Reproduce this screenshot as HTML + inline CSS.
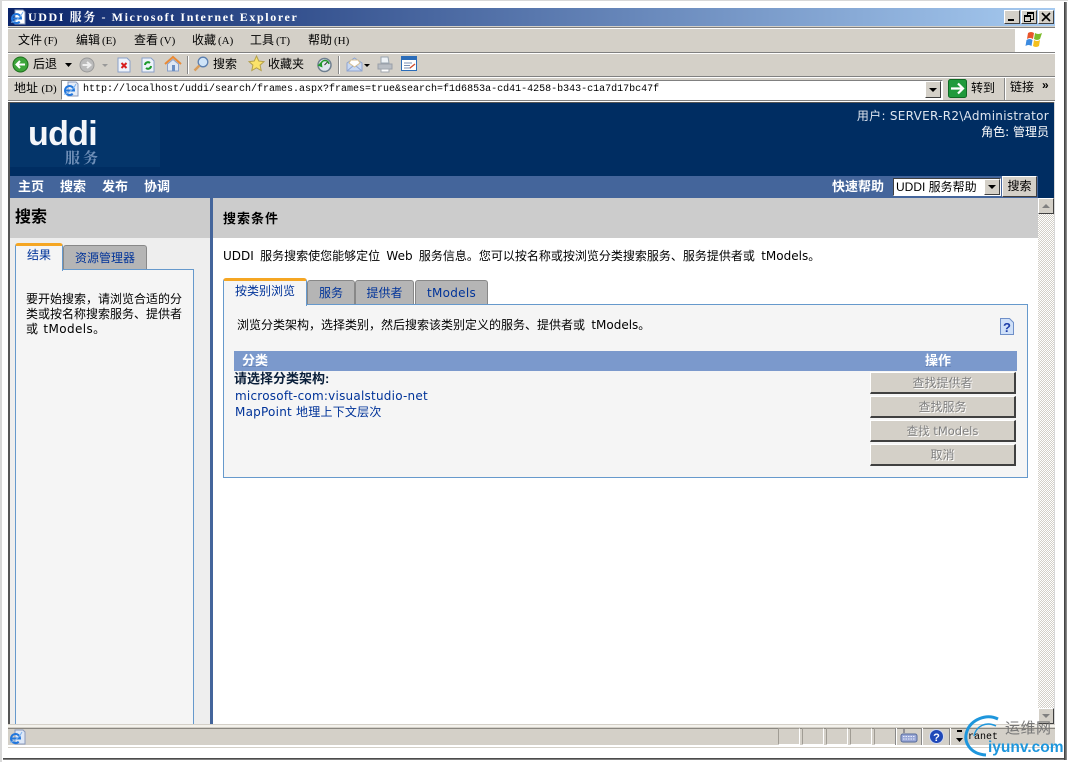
<!DOCTYPE html>
<html lang="zh"><head><meta charset="utf-8"><title>UDDI 服务</title>
<style>
html,body{margin:0;padding:0;background:#fff}
#p{position:relative;width:1068px;height:762px;overflow:hidden;background:#fff;font-family:"DejaVu Sans","Noto Sans CJK SC",sans-serif;font-size:12px;color:#000}
#p div,#p span.a,#p svg{position:absolute}
.t{white-space:nowrap;line-height:14px}
.cn{font-family:"Liberation Sans","WenQuanYi Zen Hei","Noto Sans CJK SC",sans-serif}
.b{font-weight:bold}
.lk{color:#003399;letter-spacing:.23px}
.m{font-family:"Liberation Serif",serif;font-size:11px;margin-left:2px}
.tab{box-sizing:border-box;background:#b5b5b5;border:1px solid #888;border-bottom:0;border-radius:3px 3px 0 0;color:#003399;text-align:center}
.act{box-sizing:border-box;background:#f5f5f5;border:1px solid #6699cc;border-top:3px solid #f5a623;border-bottom:0;border-radius:3px 3px 0 0;color:#003399;text-align:center}
.btn{box-sizing:border-box;left:870px;width:146px;height:22px;background:#d4d0c8;border-top:1px solid #fff;border-left:1px solid #fff;border-right:2px solid #404040;border-bottom:2px solid #404040;color:#808080;text-align:center;line-height:21px;text-shadow:1px 1px 0 #fff;white-space:nowrap}
.sc{top:728px;height:17px;width:22px;box-sizing:border-box;border:1px solid #fff;border-top-color:#a09c94;border-left-color:#a09c94}
.sep{width:1px;background:#888;border-right:1px solid #fff}
</style></head><body><div id="p">
<!-- outer edges -->
<div style="left:0;top:0;width:2px;height:762px;background:#d8d8d8"></div>
<div style="left:0;top:0;width:1068px;height:1px;background:#d8d8d8"></div>
<div style="left:3px;top:758px;width:1063px;height:2px;background:linear-gradient(#333,#999)"></div>
<div style="left:1064px;top:2px;width:3px;height:758px;background:linear-gradient(90deg,#333,#999)"></div>

<!-- chrome bg -->
<div style="left:8px;top:26px;width:1047px;height:76px;background:#d4d0c8"></div>
<!-- title bar -->
<div style="left:8px;top:8px;width:1047px;height:18px;background:linear-gradient(90deg,#0a246a,#a6caf0)"></div>
<svg style="left:10px;top:9px" width="16" height="16" viewBox="0 0 16 16"><path d="M5 1h8l2 2v12H5z" fill="#fff" stroke="#8899bb"/><path d="M3 9.500h8a4.500 4.500 0 1 0-1.300 3.200" fill="none" stroke="#2277dd" stroke-width="2"/><path d="M1 13c2 1 9-4 12-10" fill="none" stroke="#7fb4ee"/></svg>
<div class="t b" style="left:28px;top:10px;color:#fff;font-family:'Liberation Serif','Noto Serif CJK SC',serif;font-size:12px;letter-spacing:1.6px">UDDI 服务 - Microsoft Internet Explorer</div>
<!-- window buttons -->
<div style="left:1004px;top:10px;width:16px;height:14px;background:#d4d0c8;box-sizing:border-box;border:1px solid;border-color:#fff #404040 #404040 #fff"><div style="left:3px;top:8px;width:6px;height:2px;background:#000"></div></div>
<div style="left:1021px;top:10px;width:16px;height:14px;background:#d4d0c8;box-sizing:border-box;border:1px solid;border-color:#fff #404040 #404040 #fff"><div style="left:5px;top:1px;width:5px;height:5px;border:1px solid #000;border-top-width:2px"></div><div style="left:2px;top:4px;width:5px;height:4px;border:1px solid #000;border-top-width:2px;background:#d4d0c8"></div></div>
<div style="left:1038px;top:10px;width:16px;height:14px;background:#d4d0c8;box-sizing:border-box;border:1px solid;border-color:#fff #404040 #404040 #fff"><svg style="left:2px;top:1px" width="10" height="10"><path d="M1 1l8 8M9 1l-8 8" stroke="#000" stroke-width="1.600"/></svg></div>

<!-- toolbar lines -->
<div style="left:8px;top:27px;width:1047px;height:1px;background:#808080"></div>
<div style="left:8px;top:28px;width:1047px;height:1px;background:#fff"></div>
<div style="left:8px;top:52px;width:1047px;height:1px;background:#808080"></div>
<div style="left:8px;top:53px;width:1047px;height:1px;background:#fff"></div>
<div style="left:8px;top:76px;width:1047px;height:1px;background:#808080"></div>
<div style="left:8px;top:77px;width:1047px;height:1px;background:#fff"></div>
<div style="left:8px;top:100px;width:1047px;height:1px;background:#808080"></div>
<div style="left:8px;top:101px;width:1047px;height:1px;background:#fff"></div>
<!-- menu -->
<div class="t cn" style="left:18px;top:33px">文件<span class="m">(F)</span></div>
<div class="t cn" style="left:76px;top:33px">编辑<span class="m">(E)</span></div>
<div class="t cn" style="left:134px;top:33px">查看<span class="m">(V)</span></div>
<div class="t cn" style="left:192px;top:33px">收藏<span class="m">(A)</span></div>
<div class="t cn" style="left:250px;top:33px">工具<span class="m">(T)</span></div>
<div class="t cn" style="left:308px;top:33px">帮助<span class="m">(H)</span></div>
<!-- flag -->
<div style="left:1015px;top:28px;width:40px;height:24px;background:#fff"></div>
<svg style="left:1025px;top:31px" width="20" height="18" viewBox="0 0 20 18"><path d="M3 2q3-2 6 0l-1 6q-3-2-6 0z" fill="#e8552b"/><path d="M10 2q3 2 7 0l-2 6q-3 2-6 0z" fill="#7cbb2b"/><path d="M1.500 9q3-2 6 0l-1 6q-3-2-6 0z" fill="#3c8be0"/><path d="M9 9q3 2 6 0l-1 6q-3 2-6 0z" fill="#f5c01e"/></svg>

<!-- toolbar icons -->
<svg style="left:12px;top:56px" width="17" height="17" viewBox="0 0 17 17"><circle cx="8.500" cy="8.500" r="7.500" fill="#3da53a" stroke="#1d6d1c"/><path d="M13 8.500H5M8 5L4.500 8.500 8 12" fill="none" stroke="#fff" stroke-width="2"/></svg>
<div class="t cn" style="left:33px;top:57px;font-size:12px">后退</div>
<svg style="left:65px;top:63px" width="7" height="4"><path d="M0 0h7L3.500 4z" fill="#000"/></svg>
<svg style="left:79px;top:57px" width="16" height="16" viewBox="0 0 16 16"><circle cx="8" cy="8" r="7" fill="#bbb" stroke="#999"/><path d="M3.500 8H11M8 5l3.500 3L8 11" fill="none" stroke="#eee" stroke-width="2"/></svg>
<svg style="left:102px;top:64px" width="6" height="3"><path d="M0 0h6L3 3z" fill="#999"/></svg>
<svg style="left:117px;top:57px" width="14" height="16" viewBox="0 0 14 16"><path d="M1 1h9l3 3v11H1z" fill="#eef3fb" stroke="#8aa0c8"/><path d="M4.500 6l5 5M9.500 6l-5 5" stroke="#d81e1e" stroke-width="2"/></svg>
<svg style="left:141px;top:57px" width="14" height="16" viewBox="0 0 14 16"><path d="M1 1h9l3 3v11H1z" fill="#eef3fb" stroke="#8aa0c8"/><path d="M4 8a3 3 0 015-2M10 9a3 3 0 01-5 2" fill="none" stroke="#1d9a2c" stroke-width="2"/></svg>
<svg style="left:164px;top:55px" width="18" height="18" viewBox="0 0 18 18"><path d="M3.500 9v7h11V9L9 4.500z" fill="#dfe7f3" stroke="#8aa0c8"/><path d="M1 9l8-7 8 7" fill="none" stroke="#ea8a35" stroke-width="2"/><rect x="8" y="10" width="3" height="6" fill="#6b8ec2"/></svg>
<div class="sep" style="left:187px;top:56px;height:18px"></div>
<svg style="left:193px;top:56px" width="16" height="16" viewBox="0 0 16 16"><circle cx="10" cy="6" r="4.800" fill="#cfe4f8" stroke="#5b7fb0" stroke-width="1.300"/><path d="M6.500 9.500L1.500 14.500" stroke="#d89c5a" stroke-width="2.500"/></svg>
<div class="t cn" style="left:213px;top:57px">搜索</div>
<svg style="left:248px;top:55px" width="17" height="17" viewBox="0 0 17 17"><path d="M8.500 1l2.300 5 5.200.6-3.900 3.500 1.100 5.400-4.700-2.700-4.700 2.700 1.100-5.400L1 6.600 6.200 6z" fill="#fbe36a" stroke="#b4a04c"/></svg>
<div class="t cn" style="left:268px;top:57px">收藏夹</div>
<svg style="left:316px;top:57px" width="16" height="16" viewBox="0 0 16 16"><circle cx="8.500" cy="8" r="6.500" fill="#dfe6ee" stroke="#6f7f8f" stroke-width="1.500"/><path d="M1.500 8.500l4-4 1 6z" fill="#1f9a2c"/><path d="M5 8a4 4 0 018-1" fill="none" stroke="#1f9a2c" stroke-width="1.500"/><path d="M8.500 8l3-3" stroke="#333"/></svg>
<div class="sep" style="left:338px;top:56px;height:18px"></div>
<svg style="left:346px;top:56px" width="17" height="17" viewBox="0 0 17 17"><path d="M1 7l7.500-5L16 7v8H1z" fill="#c8d8f2" stroke="#8fa5d0"/><path d="M3 7l2-3h7l2 3-5.500 4z" fill="#fff" stroke="#d8c090"/><path d="M1 15l6-5M16 15l-6-5" stroke="#8fa5d0"/></svg>
<svg style="left:364px;top:64px" width="6" height="3"><path d="M0 0h6L3 3z" fill="#000"/></svg>
<svg style="left:377px;top:56px" width="16" height="17" viewBox="0 0 16 17"><path d="M4 1h7l1 6H4z" fill="#eef2f6" stroke="#9aa5b0"/><path d="M1 8h14v5H1z" fill="#b8bdc4" stroke="#9aa0a8"/><path d="M4 13h8v3H4z" fill="#fff" stroke="#a0a6ae"/></svg>
<svg style="left:401px;top:56px" width="16" height="15" viewBox="0 0 16 15"><rect x=".5" y=".5" width="15" height="14" fill="#fff" stroke="#2b6cb8"/><rect x="1" y="1" width="14" height="3" fill="#2b6cb8"/><path d="M3 7h8M3 9.500h6M3 12h7" stroke="#7a8fb5"/><path d="M9 12l5-4" stroke="#d04a2a" stroke-width="1.300"/></svg>

<!-- address -->
<div class="t cn" style="left:14px;top:81px">地址 <span class="m" style="margin:0">(D)</span></div>
<div style="left:61px;top:80px;width:882px;height:20px;box-sizing:border-box;background:#fff;border:1px solid;border-color:#808080 #fff #fff #808080;outline:0"></div>
<svg style="left:63px;top:81px" width="16" height="16" viewBox="0 0 16 16"><path d="M5 1h8l2 2v12H5z" fill="#e6edf8" stroke="#8899bb"/><path d="M3 9.500h8a4.500 4.500 0 1 0-1.300 3.200" fill="none" stroke="#2277dd" stroke-width="2"/><path d="M1 13c2 1 9-4 12-10" fill="none" stroke="#7fb4ee"/></svg>
<div class="t" style="left:83px;top:83px;font-family:'Liberation Mono',monospace;font-size:10px">http://localhost/uddi/search/frames.aspx?frames=true&amp;search=f1d6853a-cd41-4258-b343-c1a7d17bc47f</div>
<div style="left:925px;top:81px;width:16px;height:17px;box-sizing:border-box;background:#d4d0c8;border:1px solid;border-color:#fff #404040 #404040 #fff"><svg style="left:3px;top:6px" width="8" height="4"><path d="M0 0h8L4 4z" fill="#000"/></svg></div>
<svg style="left:948px;top:79px" width="19" height="19" viewBox="0 0 19 19"><rect x=".5" y=".5" width="18" height="18" rx="2" fill="#1f9a3c" stroke="#0f6a24"/><path d="M3 9.500h12M10 4.500l5 5-5 5" fill="none" stroke="#fff" stroke-width="2.200"/></svg>
<div class="t cn" style="left:971px;top:81px">转到</div>
<div class="sep" style="left:1004px;top:78px;height:22px"></div>
<div class="t cn" style="left:1010px;top:80px">链接</div>
<div class="t b" style="left:1042px;top:78px;font-size:12px;font-family:'Liberation Sans',sans-serif">»</div>

<!-- page header -->
<div style="left:8px;top:102px;width:2px;height:622px;background:#555"></div>
<div style="left:8px;top:102px;width:1046px;height:1px;background:#555"></div>
<div style="left:10px;top:103px;width:1044px;height:73px;background:#002d62"></div>
<div style="left:10px;top:103px;width:150px;height:64px;background:#04356a"></div>
<div class="t b" style="left:28px;top:119px;font-family:'Liberation Sans',sans-serif;font-size:34px;line-height:30px;letter-spacing:-.7px;color:#f4f6fa">uddi</div>
<div class="t b" style="left:65px;top:151px;font-family:'Noto Serif CJK SC',serif;font-size:15px;letter-spacing:3px;color:#6f8fb8">服务</div>
<div class="t" style="right:19px;top:109px;color:#dfe6f0;letter-spacing:.28px">用户: SERVER-R2\Administrator</div>
<div class="t" style="right:19px;top:125px;color:#fff">角色: 管理员</div>
<!-- nav -->
<div style="left:10px;top:176px;width:1028px;height:22px;background:#44659b"></div>
<div style="left:1038px;top:176px;width:16px;height:22px;background:#002d62"></div>
<div class="t cn b" style="left:18px;top:180px;color:#fff;font-size:13px">主页</div>
<div class="t cn b" style="left:60px;top:180px;color:#fff;font-size:13px">搜索</div>
<div class="t cn b" style="left:102px;top:180px;color:#fff;font-size:13px">发布</div>
<div class="t cn b" style="left:144px;top:180px;color:#fff;font-size:13px">协调</div>
<div class="t cn b" style="left:832px;top:180px;color:#fff;font-size:13px">快速帮助</div>
<div style="left:893px;top:178px;width:108px;height:18px;box-sizing:border-box;background:#fff;border:1px solid;border-color:#404040 #fff #fff #404040"></div>
<div class="t" style="left:896px;top:180px;font-family:'Liberation Sans','Noto Sans CJK SC',sans-serif">UDDI 服务帮助</div>
<div style="left:984px;top:179px;width:16px;height:16px;box-sizing:border-box;background:#d4d0c8;border:1px solid;border-color:#fff #404040 #404040 #fff"><svg style="left:3px;top:5px" width="8" height="4"><path d="M0 0h8L4 4z" fill="#000"/></svg></div>
<div class="cn" style="left:1002px;top:176px;width:35px;height:21px;box-sizing:border-box;background:#d4d0c8;border:1px solid;border-color:#fff #404040 #404040 #fff;text-align:center;line-height:19px">搜索</div>

<!-- left pane -->
<div style="left:10px;top:198px;width:200px;height:526px;background:#eeeeee"></div>
<div style="left:10px;top:198px;width:200px;height:40px;background:#cccccc"></div>
<div class="t cn b" style="left:15px;top:209px;font-size:16px;line-height:18px">搜索</div>
<div style="left:210px;top:198px;width:3px;height:526px;background:#44659b"></div>
<div style="left:15px;top:269px;width:179px;height:455px;box-sizing:border-box;background:#f5f5f5;border:1px solid #6699cc;border-bottom:0"></div>
<div class="tab cn" style="left:63px;top:245px;width:84px;height:24px;line-height:24px">资源管理器</div>
<div class="act cn" style="left:15px;top:243px;width:48px;height:28px;line-height:19px">结果</div>
<div class="cn" style="left:26px;top:292px;width:160px;line-height:15px;font-size:12px">要开始搜索，请浏览合适的分类或按名称搜索服务、提供者或 <span style="font-family:'DejaVu Sans';letter-spacing:.4px;margin-left:2px">tModels</span>。</div>

<!-- right pane -->
<div style="left:213px;top:198px;width:825px;height:40px;background:#cccccc"></div>
<div class="t cn b" style="left:223px;top:212px;font-size:13px;letter-spacing:1px">搜索条件</div>
<div class="t" style="left:223px;top:249px;font-size:12px;word-spacing:2.500px">UDDI 服务搜索使您能够定位 Web 服务信息。您可以按名称或按浏览分类搜索服务、服务提供者或 tModels。</div>

<div style="left:223px;top:304px;width:805px;height:174px;box-sizing:border-box;background:#f5f5f5;border:1px solid #6699cc"></div>
<div class="tab cn" style="left:307px;top:280px;width:48px;height:24px;line-height:25px">服务</div>
<div class="tab cn" style="left:355px;top:280px;width:59px;height:24px;line-height:25px">提供者</div>
<div class="tab" style="left:415px;top:280px;width:73px;height:24px;line-height:25px;font-size:12px;letter-spacing:.3px">tModels</div>
<div class="act cn" style="left:223px;top:278px;width:84px;height:28px;line-height:20px">按类别浏览</div>
<div class="t" style="left:237px;top:318px;font-size:12px;word-spacing:2.500px">浏览分类架构，选择类别，然后搜索该类别定义的服务、提供者或 tModels。</div>
<svg style="left:1000px;top:318px" width="14" height="17" viewBox="0 0 14 17"><path d="M.5.500h9l4 4v12H.5z" fill="#cfe0f8" stroke="#6f8fc8"/><text x="7" y="14" text-anchor="middle" font-family="Liberation Sans" font-weight="bold" font-size="13" fill="#1f3fa8">?</text></svg>

<div style="left:234px;top:351px;width:783px;height:20px;background:#7b99cc"></div>
<div class="t cn b" style="left:242px;top:354px;color:#fff;font-size:13px;text-decoration:underline;text-decoration-color:#6a86b8">分类</div>
<div class="t cn b" style="left:925px;top:354px;color:#fff;font-size:13px;text-decoration:underline;text-decoration-color:#6a86b8">操作</div>
<div class="t cn b" style="left:234px;top:372px;color:#0a1f3a;font-size:13px">请选择分类架构:</div>
<div class="t lk" style="left:235px;top:389px;font-size:12px">microsoft-com:visualstudio-net</div>
<div class="t lk" style="left:235px;top:405px;font-size:12px">MapPoint 地理上下文层次</div>
<div class="btn cn" style="top:372px">查找提供者</div>
<div class="btn cn" style="top:396px">查找服务</div>
<div class="btn" style="top:420px;font-size:11.500px">查找 tModels</div>
<div class="btn cn" style="top:444px">取消</div>

<!-- scrollbar -->
<div style="left:1038px;top:198px;width:16px;height:526px;background-color:#eeece8;background-image:repeating-conic-gradient(#d4d0c8 0 25%,#fff 0 50%);background-size:2px 2px"></div>
<div style="left:1038px;top:198px;width:16px;height:16px;box-sizing:border-box;background:#d4d0c8;border:1px solid;border-color:#fff #404040 #404040 #fff"><svg style="left:3px;top:5px" width="8" height="4"><path d="M0 4h8L4 0z" fill="#808080"/></svg></div>
<div style="left:1038px;top:708px;width:16px;height:16px;box-sizing:border-box;background:#d4d0c8;border:1px solid;border-color:#fff #404040 #404040 #fff"><svg style="left:3px;top:5px" width="8" height="4"><path d="M0 0h8L4 4z" fill="#808080"/></svg></div>
<div style="left:1054px;top:102px;width:1px;height:622px;background:#d8d8d8"></div>

<!-- status bar -->
<div style="left:8px;top:724px;width:1047px;height:24px;background:#d4d0c8"></div>
<div style="left:8px;top:725px;width:1047px;height:2px;background:#f4f2ec"></div>
<div style="left:8px;top:728px;width:1047px;height:1px;background:#8a8780"></div>
<div style="left:8px;top:745px;width:1047px;height:2px;background:#fff"></div>
<div style="left:8px;top:749px;width:1047px;height:9px;background:#fff"></div>
<svg style="left:9px;top:729px" width="17" height="16" viewBox="0 0 17 16"><path d="M6 1h8l2 2v12H6z" fill="#dfe8f6" stroke="#8899bb"/><path d="M3 9.500h8a4.500 4.500 0 1 0-1.300 3.200" fill="none" stroke="#2277dd" stroke-width="2"/><path d="M1 13c2 1 9-4 12-10" fill="none" stroke="#7fb4ee"/></svg>
<div class="sc" style="left:778px"></div><div class="sc" style="left:802px"></div><div class="sc" style="left:826px"></div><div class="sc" style="left:850px"></div><div class="sc" style="left:874px"></div>
<div class="sep" style="left:895px;top:728px;height:17px"></div>
<svg style="left:900px;top:728px" width="18" height="16" viewBox="0 0 18 16"><path d="M4 1v4" stroke="#556" /><rect x="1" y="6" width="16" height="8" rx="2" fill="#9aa8d8" stroke="#556a9a"/><path d="M3 8.500h12M3 11h12" stroke="#e6ecfa" stroke-dasharray="1.500 1"/></svg>
<div class="sep" style="left:921px;top:728px;height:17px"></div>
<svg style="left:929px;top:729px" width="15" height="15" viewBox="0 0 15 15"><circle cx="7.500" cy="7.500" r="7" fill="#1f48b8" stroke="#cfd8f0"/><text x="7.500" y="12" text-anchor="middle" font-family="Liberation Sans" font-weight="bold" font-size="11" fill="#fff">?</text></svg>
<div class="sep" style="left:949px;top:728px;height:17px"></div>
<div style="left:957px;top:730px;width:5px;height:2px;background:#000"></div>
<svg style="left:956px;top:738px" width="7" height="4"><path d="M0 0h7L3.500 4z" fill="#000"/></svg>
<div class="t" style="left:968px;top:731px;font-family:'Liberation Mono',monospace;font-size:10px">ranet</div>
<!-- watermark -->
<svg style="left:960px;top:712px" width="60" height="46" viewBox="0 0 60 46"><path d="M26 43C10 42 3 30 7 19 11 8 26 1 38 7" fill="none" stroke="#1e96dc" stroke-width="3"/><path d="M14 24C16 14 26 9 36 14" fill="none" stroke="#1e96dc" stroke-width="1.500"/></svg>
<div class="t" style="left:1005px;top:719px;font-family:'Noto Sans CJK SC',sans-serif;font-size:15px;line-height:18px;color:#777;letter-spacing:.5px">运维网</div>
<div class="t b" style="left:988px;top:739px;font-family:'Liberation Sans',sans-serif;font-size:15.500px;line-height:18px;color:#1e96dc">iyunv.com</div>
</div></body></html>
